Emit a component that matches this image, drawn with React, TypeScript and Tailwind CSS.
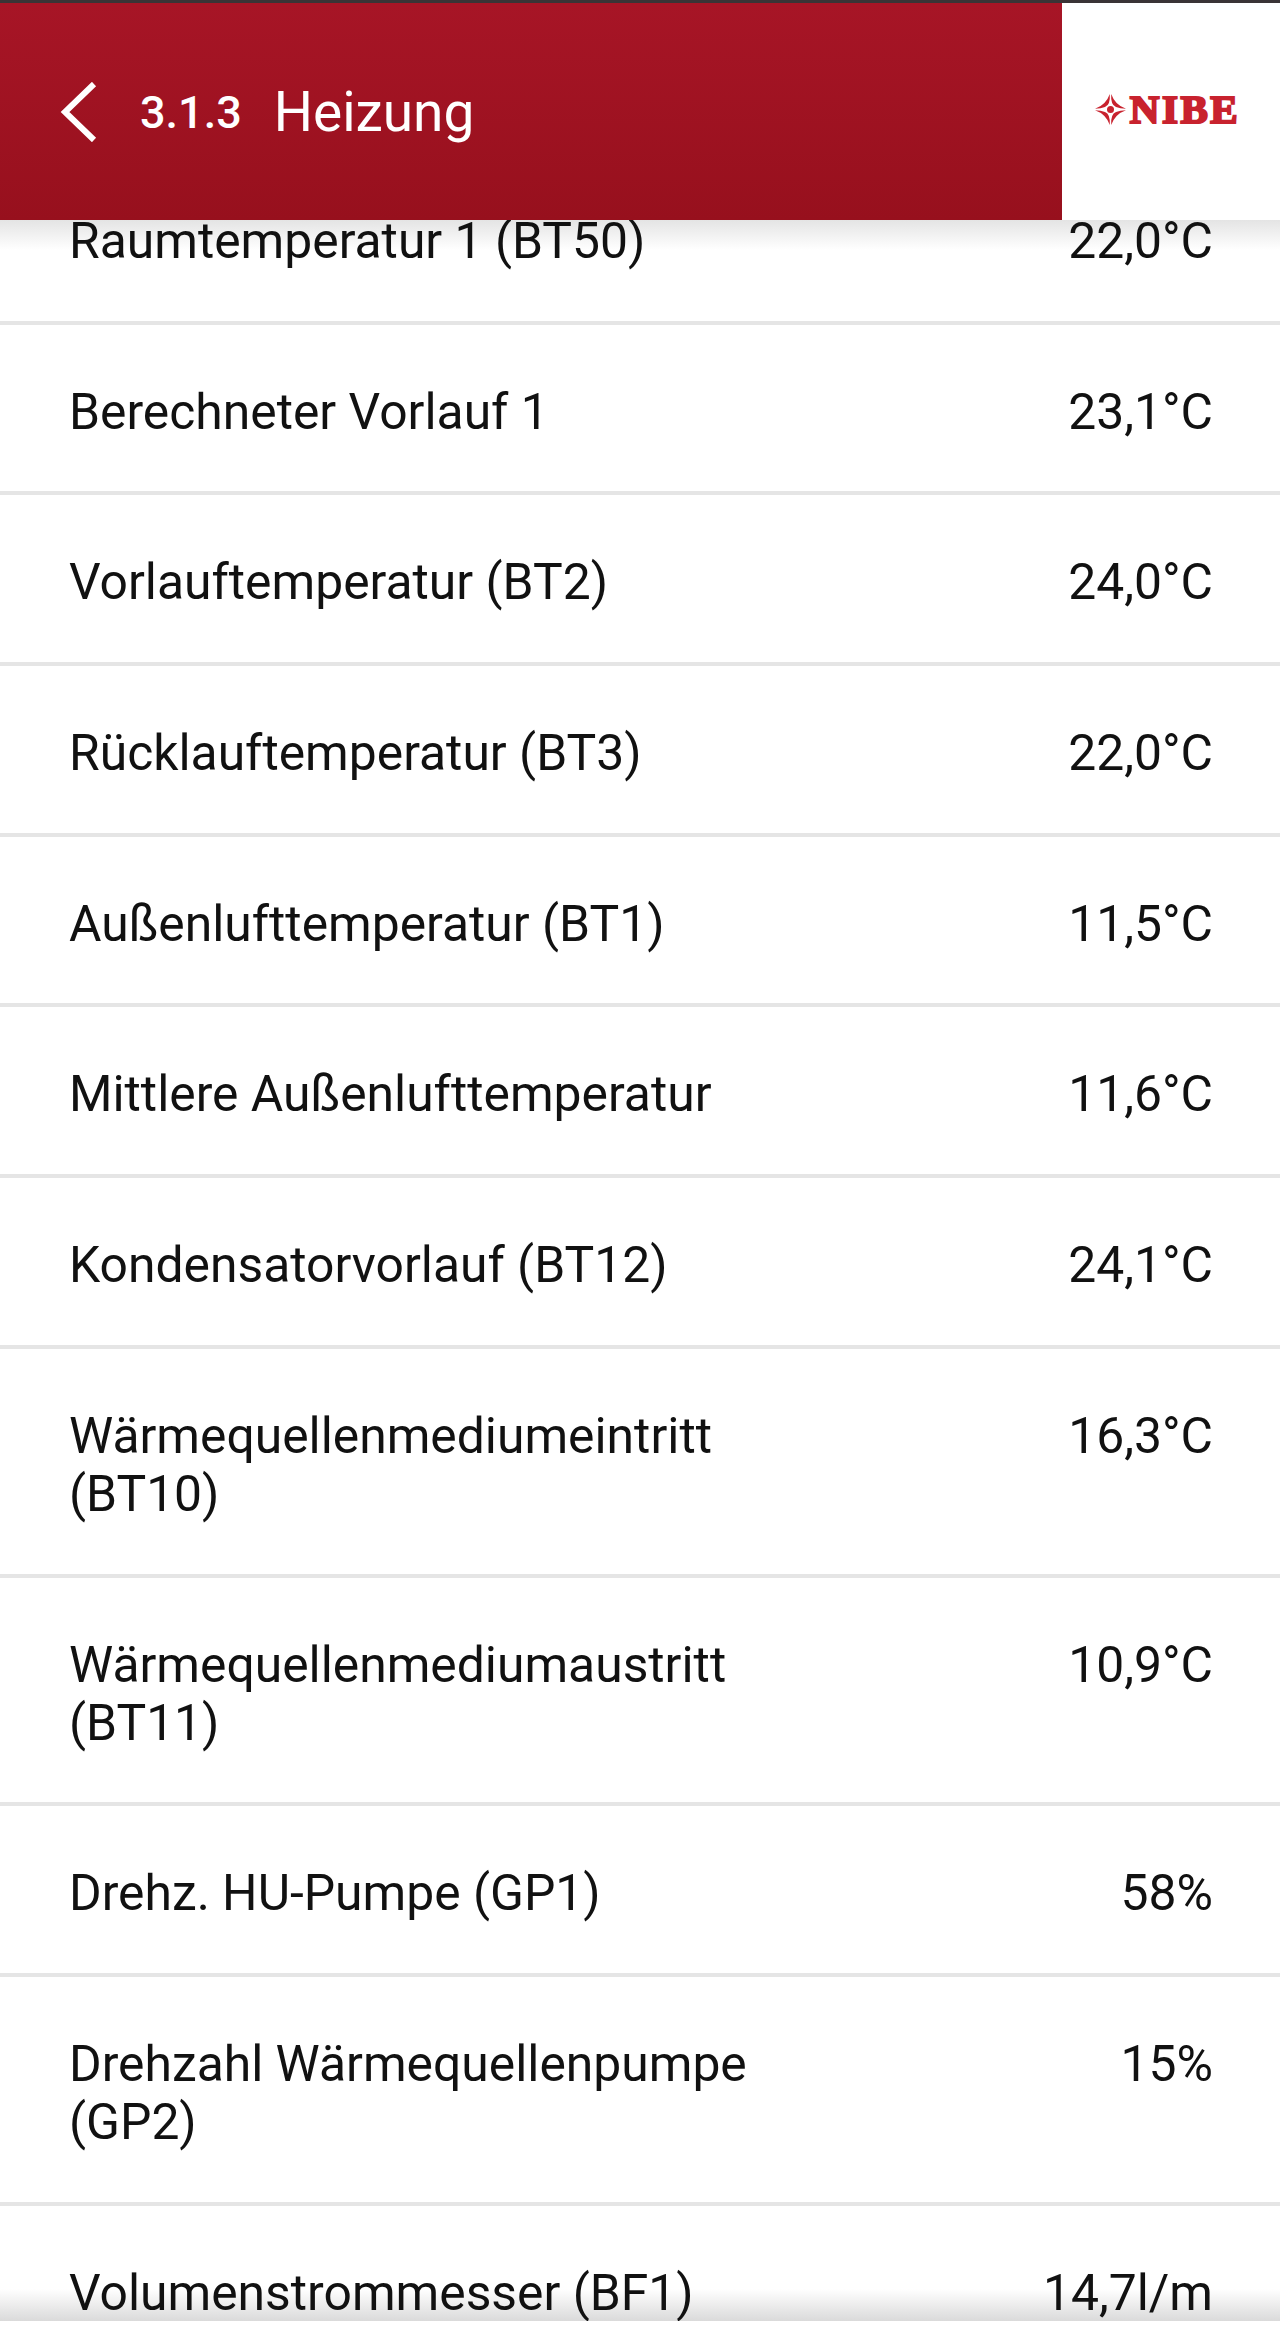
type Row = { label: string; value: string };

const rows: Row[] = [
  { label: "Raumtemperatur 1 (BT50)", value: "22,0°C" },
  { label: "Berechneter Vorlauf 1", value: "23,1°C" },
  { label: "Vorlauftemperatur (BT2)", value: "24,0°C" },
  { label: "Rücklauftemperatur (BT3)", value: "22,0°C" },
  { label: "Außenlufttemperatur (BT1)", value: "11,5°C" },
  { label: "Mittlere Außenlufttemperatur", value: "11,6°C" },
  { label: "Kondensatorvorlauf (BT12)", value: "24,1°C" },
  { label: "Wärmequellenmediumeintritt (BT10)", value: "16,3°C" },
  { label: "Wärmequellenmediumaustritt (BT11)", value: "10,9°C" },
  { label: "Drehz. HU-Pumpe (GP1)", value: "58%" },
  { label: "Drehzahl Wärmequellenpumpe (GP2)", value: "15%" },
  { label: "Volumenstrommesser (BF1)", value: "14,7l/m" },
];

function NibeLogo() {
  return (
    <div className="flex items-center gap-[4px] text-[#c8222e]">
      <svg width="31" height="31" viewBox="0 0 31 31" fill="currentColor">
        <circle cx="15.500" cy="15.500" r="3.500" />
        <path d="M0 14.800 Q11 11 14.800 0 Q15.500 11 10 13 Q6 14.800 0 14.800 Z" />
        <path d="M31 14.800 Q20 11 16.200 0 Q15.500 11 21 13 Q25 14.800 31 14.800 Z" />
        <path d="M0 16.200 Q11 20 14.800 31 Q15.500 20 10 18 Q6 16.200 0 16.200 Z" />
        <path d="M31 16.200 Q20 20 16.200 31 Q15.500 20 21 18 Q25 16.200 31 16.200 Z" />
      </svg>
      <span className="font-['Liberation_Serif',serif] text-[41px] leading-none font-bold tracking-[2.5px] [-webkit-text-stroke:2.2px_#c8222e]">
        NIBE
      </span>
    </div>
  );
}

export default function App() {
  return (
    <div className="relative flex h-[2337px] w-[1280px] flex-col overflow-hidden bg-white font-['Roboto',sans-serif] text-[#111]">
      {/* status bar edge */}
      <div className="h-[3px] bg-[#3a3436]" />

      {/* header */}
      <header className="relative z-10 flex h-[217px] shrink-0">
        <div className="flex w-[1062px] items-center bg-gradient-to-b from-[#a71526] to-[#97101d] pl-[60px] text-white">
          <svg width="38" height="60" viewBox="0 0 38 60" fill="none" stroke="currentColor" strokeWidth="6">
            <path d="M34 2 L5 30 L34 58" />
          </svg>
          <span className="mt-[2px] ml-[42px] text-[45px] font-medium">3.1.3</span>
          <span className="mt-[2px] ml-[32px] text-[55px]">Heizung</span>
        </div>
        <div className="flex flex-1 items-center justify-center bg-white pr-[7px] pb-[4px]">
          <NibeLogo />
        </div>
      </header>

      {/* list, with the shadows lying behind the text */}
      <div className="relative min-h-0 flex-1 overflow-hidden">
        <div className="absolute inset-x-0 top-0 h-[30px] bg-gradient-to-b from-[#e4e4e4] to-transparent" />
        <div className="absolute inset-x-0 bottom-0 h-[32px] bg-gradient-to-b from-transparent to-[#dadada]" />
        <div className="relative -mt-[66px]">
          {rows.map((row) => (
            <div
              key={row.label}
              className="flex justify-between border-b-[4px] border-[#e5e5e5] pt-[58px] pr-[67px] pb-[50.7px] pl-[69px] text-[49.8px] leading-[58px]"
            >
              <span className="w-[760px]">{row.label}</span>
              <span className="whitespace-nowrap">{row.value}</span>
            </div>
          ))}
        </div>
      </div>

      <div className="h-[16px] shrink-0 bg-white" />
    </div>
  );
}
